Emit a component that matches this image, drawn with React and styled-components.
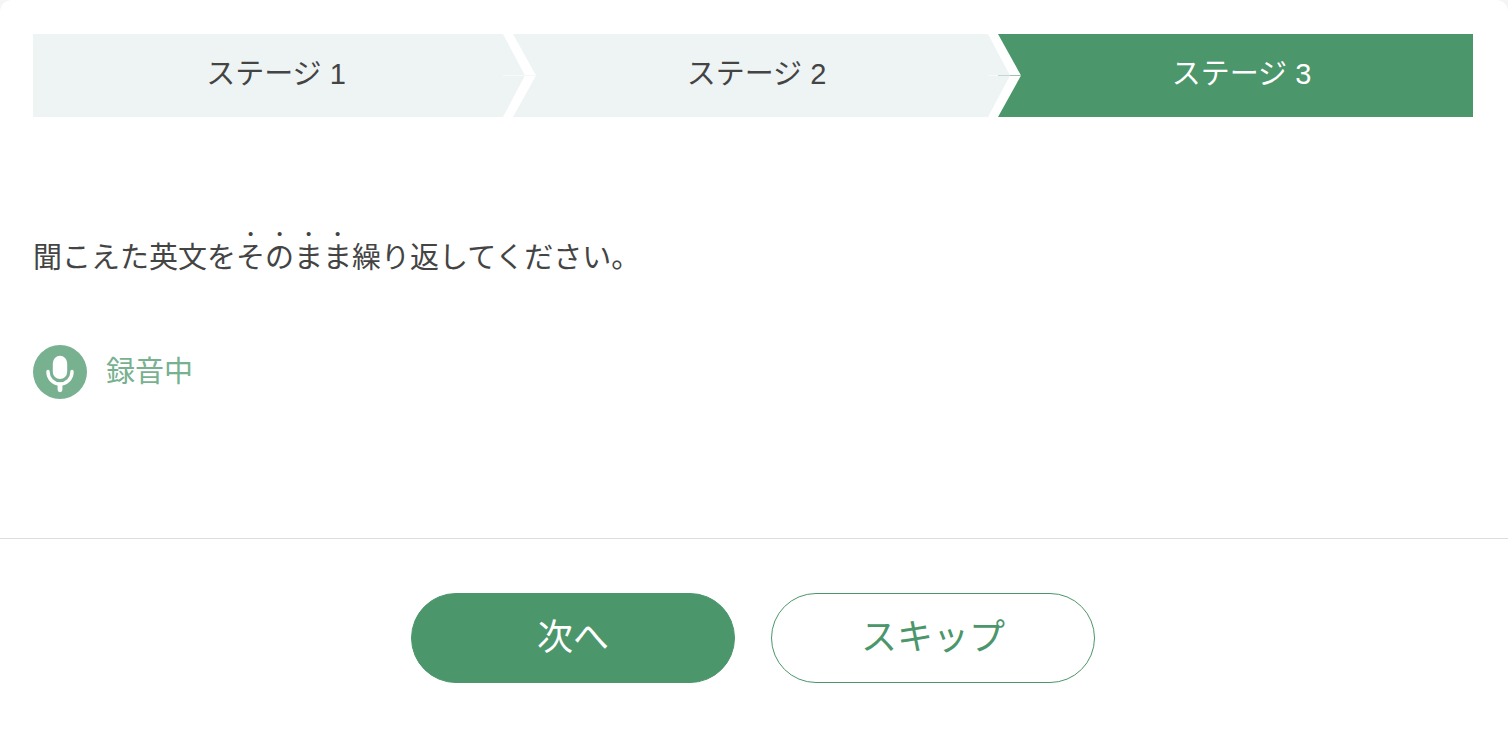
import React from "react";
import styled, { createGlobalStyle } from "styled-components";

const stages = [
  { id: 1, label: "ステージ 1" },
  { id: 2, label: "ステージ 2" },
  { id: 3, label: "ステージ 3" },
];

function MicIcon() {
  return (
    <svg width="54" height="54" viewBox="0 0 54 54" aria-hidden="true">
      <circle cx="27" cy="27" r="27" fill="#78b18f" />
      <rect x="19.8" y="10.8" width="14.4" height="23.2" rx="7.2" fill="#fff" />
      <path
        d="M15 26.4V27a12 12 0 0 0 24 0v-.6"
        fill="none"
        stroke="#fff"
        strokeWidth="3.4"
        strokeLinecap="round"
      />
      <path
        d="M27 40v4.8"
        stroke="#fff"
        strokeWidth="4.8"
        strokeLinecap="round"
      />
    </svg>
  );
}

function App() {
  const current = 3;

  return (
    <>
      <GlobalStyle />
      <Card>
        <Main>
          <StageList>
            {stages.map((stage) => (
              <Stage
                key={stage.id}
                $active={stage.id === current}
                aria-current={stage.id === current ? "step" : undefined}
              >
                {stage.label}
              </Stage>
            ))}
          </StageList>
          <Instruction>
            聞こえた英文を<Emphasis>そのまま</Emphasis>繰り返してください。
          </Instruction>
          <Recording role="status">
            <MicIcon />
            <RecordingLabel>録音中</RecordingLabel>
          </Recording>
        </Main>
        <Footer>
          <Button type="button" $primary>
            次へ
          </Button>
          <Button type="button">スキップ</Button>
        </Footer>
      </Card>
    </>
  );
}

export default App;

const GlobalStyle = createGlobalStyle`
  * {
    box-sizing: border-box;
  }

  body {
    margin: 0;
    background-color: #f4f6f6;
    color: #444;
    font-family: "Liberation Sans", "Noto Sans CJK JP", sans-serif;
    font-size: 29px;
  }
`;

const Card = styled.div`
  min-height: 100vh;
  display: flex;
  flex-direction: column;
  background-color: #fff;
  border-radius: 12px 12px 0 0;
`;

const Main = styled.main`
  padding: 34px 35px 139px 33px;
`;

const StageList = styled.ol`
  display: grid;
  grid-template-columns: 480fr 485fr 475fr;
  margin: 0;
  padding: 0;
  list-style: none;
`;

const Stage = styled.li`
  position: relative;
  z-index: 0;
  display: flex;
  align-items: center;
  justify-content: center;
  height: 83px;
  margin-right: -12px;
  padding: 0 10px 10px 0;
  color: ${(props) => (props.$active ? "#fff" : "#444")};

  &::before {
    content: "";
    position: absolute;
    inset: 0;
    z-index: -1;
    background-color: ${(props) => (props.$active ? "#4b966a" : "#eef4f4")};
    clip-path: polygon(
      0 0,
      calc(100% - 22px) 0,
      100% 50%,
      calc(100% - 22px) 100%,
      0 100%,
      23px 50%
    );
  }

  /* hairline where the two halves of the arrow meet */
  &:not(:first-child)::after {
    content: "";
    position: absolute;
    top: 41px;
    left: -10px;
    width: 33px;
    height: 1px;
    background: ${(props) =>
      props.$active
        ? "linear-gradient(90deg, #f7fafa 10px, #c3d9cd 10px 22px, #9dc3ac 22px)"
        : "linear-gradient(90deg, #f7fafa 22px, #f5f9f9 22px)"};
  }

  &:first-child {
    padding-right: 6px;
  }

  &:first-child::before {
    clip-path: polygon(
      0 0,
      calc(100% - 22px) 0,
      100% 50%,
      calc(100% - 22px) 100%,
      0 100%
    );
  }

  &:last-child {
    margin-right: 0;
    padding: 0 0 10px 12px;
  }

  &:last-child::before {
    clip-path: polygon(0 0, 100% 0, 100% 100%, 0 100%, 23px 50%);
  }
`;

const Instruction = styled.p`
  margin: 107px 0 0;
  line-height: 68px;
`;

const Emphasis = styled.em`
  font-style: normal;
  text-emphasis: filled dot;
  text-emphasis-position: over right;
`;

const Recording = styled.div`
  display: flex;
  align-items: center;
  gap: 19px;
  margin-top: 53px;
  color: #78b18f;
`;

const RecordingLabel = styled.span`
  padding-bottom: 6px;
`;

const Footer = styled.footer`
  display: flex;
  justify-content: center;
  gap: 36px;
  padding: 54px 35px 53px 33px;
  border-top: 1px solid #ddd;
`;

const Button = styled.button`
  width: 324px;
  height: 90px;
  padding: 0 0 8px;
  border: 1px solid #4b966a;
  border-radius: 45px;
  background-color: ${(props) => (props.$primary ? "#4b966a" : "#fff")};
  color: ${(props) => (props.$primary ? "#fff" : "#4b966a")};
  font-family: inherit;
  font-size: 36px;
  cursor: pointer;
`;
